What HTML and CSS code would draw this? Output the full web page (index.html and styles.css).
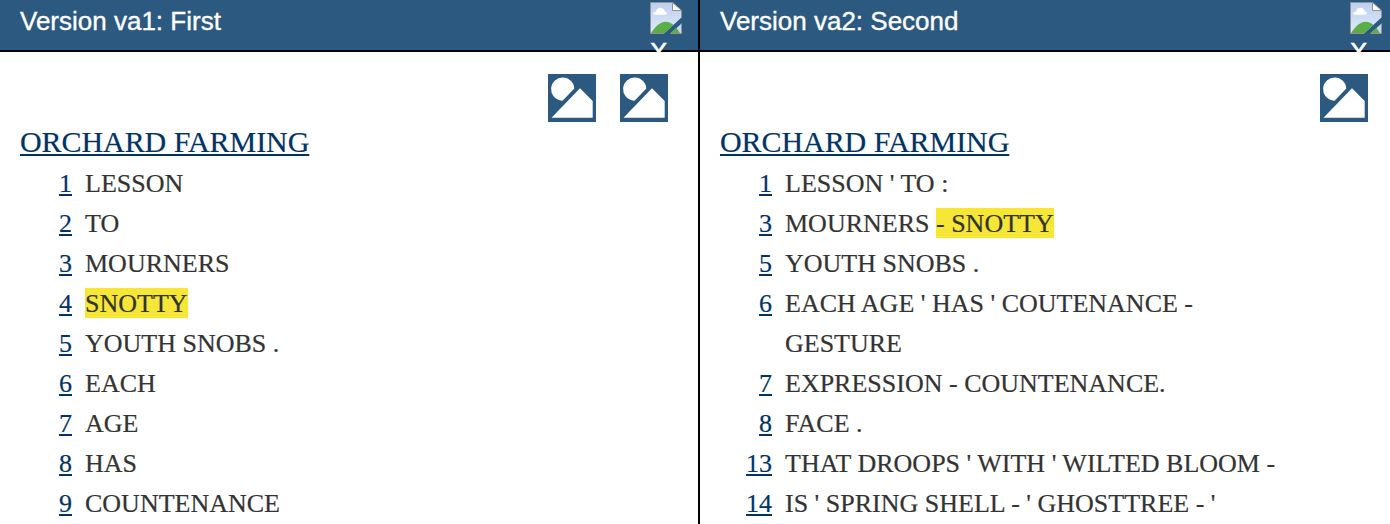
FILE: index.html
```html
<!DOCTYPE html>
<html lang="en">
<head>
<meta charset="utf-8">
<title>Versions</title>
<link rel="stylesheet" href="styles.css">
</head>
<body>
<svg class="defs" width="0" height="0">
  <defs><linearGradient id="sky" x1="0" y1="0" x2="0" y2="1"><stop stop-color="#bccff0"/><stop offset="1" stop-color="#dfeafc"/></linearGradient></defs>
  <symbol id="picture" viewBox="0 0 48 48">
    <rect width="48" height="48" fill="#2c5980"/>
    <path d="M13 26.6A11.6 11.6 0 1 1 26.3 14.6L14.8 26.4Q14 26.8 13 26.6Z" fill="#fff"/>
    <path d="M3.5 43.7L32 14.3L44.7 27V43.7Z" fill="#fff"/>
  </symbol>
  <symbol id="broken" viewBox="0 0 32 32">
    <path d="M.5 .5H23L31.5 8.5V15.5L14 31.5H.5Z" fill="url(#sky)"/>
    <path d="M1 31C5 25 10 19.8 15.5 19.8C18.8 19.8 21.5 21.2 23.5 23L14.5 31Z" fill="#5bad46"/>
    <path d="M20.5 31.5L31.5 21.5V31.5Z" fill="#c8d8f4"/>
    <path d="M20.5 31L26.3 25.8L30 31Z" fill="#5bad46"/>
    <path d="M5 12.8C2.5 12.8 2.8 9.8 6 9.8C6.5 4.5 14 4.5 14.8 9.5C17.5 9.5 17.5 12.8 15 12.8Z" fill="#fff"/>
    <path d="M22.5 .5V8.5H31.5Z" fill="#fff"/>
    <path d="M14 31.5H.5V.5H22.5L31.5 8.5V15.5M22.5 .5V8.5H31.5M20.5 31.5H31.5V21.5" fill="none" stroke="#929292"/>
  </symbol>
</svg>
<main class="versions">
  <section class="version">
    <header class="bar">
      <h2 class="name">Version va1: First</h2>
      <a class="close"><svg class="broken"><use href="#broken"/></svg><span>X</span></a>
    </header>
    <div class="text">
      <div class="pictures"><svg><use href="#picture"/></svg><svg><use href="#picture"/></svg></div>
      <h1 class="title"><a>ORCHARD FARMING</a></h1>
      <div class="line"><a class="num">1</a><p>LESSON</p></div>
      <div class="line"><a class="num">2</a><p>TO</p></div>
      <div class="line"><a class="num">3</a><p>MOURNERS</p></div>
      <div class="line"><a class="num">4</a><p><mark>SNOTTY</mark></p></div>
      <div class="line"><a class="num">5</a><p>YOUTH SNOBS .</p></div>
      <div class="line"><a class="num">6</a><p>EACH</p></div>
      <div class="line"><a class="num">7</a><p>AGE</p></div>
      <div class="line"><a class="num">8</a><p>HAS</p></div>
      <div class="line"><a class="num">9</a><p>COUNTENANCE</p></div>
    </div>
  </section>
  <section class="version">
    <header class="bar">
      <h2 class="name">Version va2: Second</h2>
      <a class="close"><svg class="broken"><use href="#broken"/></svg><span>X</span></a>
    </header>
    <div class="text">
      <div class="pictures"><svg><use href="#picture"/></svg></div>
      <h1 class="title"><a>ORCHARD FARMING</a></h1>
      <div class="line"><a class="num">1</a><p>LESSON ' TO :</p></div>
      <div class="line"><a class="num">3</a><p>MOURNERS <mark>- SNOTTY</mark></p></div>
      <div class="line"><a class="num">5</a><p>YOUTH SNOBS .</p></div>
      <div class="line"><a class="num">6</a><p>EACH AGE ' HAS ' COUTENANCE -<br>GESTURE</p></div>
      <div class="line"><a class="num">7</a><p>EXPRESSION - COUNTENANCE.</p></div>
      <div class="line"><a class="num">8</a><p>FACE .</p></div>
      <div class="line"><a class="num">13</a><p>THAT DROOPS ' WITH ' WILTED BLOOM -</p></div>
      <div class="line"><a class="num">14</a><p>IS ' SPRING SHELL - ' GHOSTTREE - '</p></div>
    </div>
  </section>
</main>
</body>
</html>
```
FILE: styles.css
```css
* { box-sizing: border-box; margin: 0; padding: 0; }
body { background: #fff; overflow: hidden; }
.defs { display: block; height: 0; }
.versions { display: grid; grid-template-columns: 700px 700px; width: 1400px; height: 524px; overflow: hidden; }
.version { border-right: 2px solid #000; }
.bar {
  display: flex; justify-content: space-between;
  height: 52px; padding: 0 16px 0 20px;
  background: #2c5980; border-bottom: 2px solid #000;
  color: #fff; font: 26px/42px "Liberation Sans", Arial, sans-serif;
  -webkit-text-stroke: 0.35px #fff;
}
.name { font: inherit; }
.close { display: flex; flex-direction: column; width: 32px; height: 52px; padding-top: 2px; }
.close span { line-height: 30px; margin-top: 3px; -webkit-text-stroke: 0.6px #fff; }
.broken { display: block; flex: none; width: 32px; height: 32px; }
.text { padding: 22px 30px 0 20px; color: #333; font: 26px/40px "Liberation Serif", "Times New Roman", serif; -webkit-text-stroke: 0.2px; }
.pictures { display: flex; justify-content: flex-end; gap: 24px; height: 48px; }
.pictures svg { width: 48px; height: 48px; }
.title { font-size: 30px; line-height: 40px; margin-bottom: 2px; font-weight: normal; letter-spacing: -0.07px; }
.title a, .num { color: #003366; text-decoration: underline; text-decoration-thickness: 2px; text-underline-offset: 2px; text-decoration-skip-ink: none; -webkit-text-stroke: 0.2px #003366; }
.line { display: flex; gap: 13px; white-space: nowrap; }
.num { width: 52px; text-align: right; }
mark { background: #f6e636; color: inherit; padding-top: 1px; }
```
